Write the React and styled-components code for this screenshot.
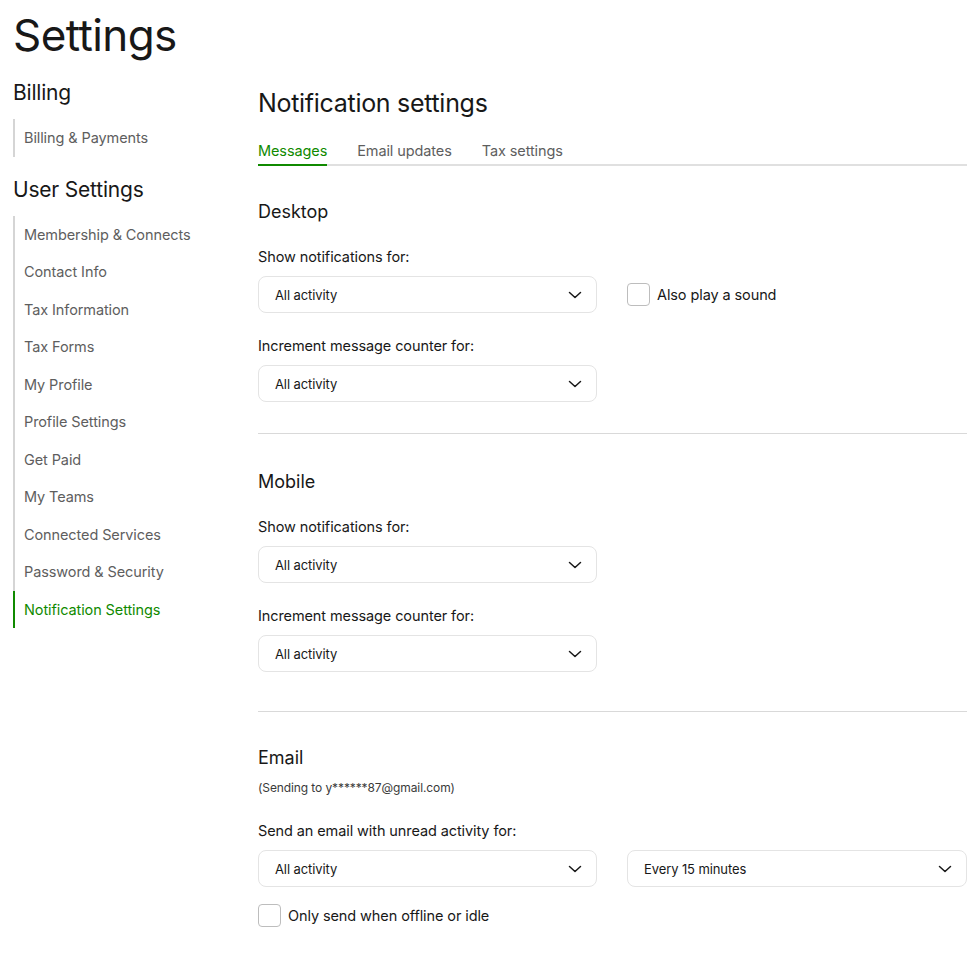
import React from "react";
import styled, { createGlobalStyle } from "styled-components";

const GlobalStyle = createGlobalStyle`
  body {
    margin: 0;
    font-family: Inter, "Noto Sans", Arial, sans-serif;
    color: #181818;
    background: #fff;
  }
  * { box-sizing: border-box; }
`;

const sideGroups = [
  { title: "Billing", items: ["Billing & Payments"] },
  {
    title: "User Settings",
    items: [
      "Membership & Connects",
      "Contact Info",
      "Tax Information",
      "Tax Forms",
      "My Profile",
      "Profile Settings",
      "Get Paid",
      "My Teams",
      "Connected Services",
      "Password & Security",
      "Notification Settings",
    ],
  },
];

const Chevron = () => (
  <svg width="14" height="14" viewBox="0 0 14 14" fill="none">
    <path d="M1.5 4.5 L7 9.5 L12.5 4.5" stroke="#181818" strokeWidth="1.5" strokeLinecap="round" strokeLinejoin="round" />
  </svg>
);

const Select = ({ value, wide }) => (
  <SelectBox $wide={wide}>
    <span>{value}</span>
    <Chevron />
  </SelectBox>
);

const App = () => {
  return (
    <Page>
      <GlobalStyle />
      <PageTitle>Settings</PageTitle>
      <Layout>
        <Sidebar>
          {sideGroups.map((g) => (
            <SideGroup key={g.title}>
              <SideTitle>{g.title}</SideTitle>
              <SideList>
                {g.items.map((item) => (
                  <SideItem key={item} $active={item === "Notification Settings"}>
                    {item}
                  </SideItem>
                ))}
              </SideList>
            </SideGroup>
          ))}
        </Sidebar>

        <Main>
          <MainTitle>Notification settings</MainTitle>
          <Tabs>
            <Tab $active>Messages</Tab>
            <Tab>Email updates</Tab>
            <Tab>Tax settings</Tab>
          </Tabs>

          <Section $bottom={31}>
            <SectionTitle>Desktop</SectionTitle>
            <FieldLabel>Show notifications for:</FieldLabel>
            <FieldRow>
              <Select value="All activity" />
              <Check>
                <Box />
                Also play a sound
              </Check>
            </FieldRow>
            <FieldLabel>Increment message counter for:</FieldLabel>
            <FieldRow>
              <Select value="All activity" />
            </FieldRow>
          </Section>

          <Divider />

          <Section $top={36} $bottom={39}>
            <SectionTitle>Mobile</SectionTitle>
            <FieldLabel>Show notifications for:</FieldLabel>
            <FieldRow>
              <Select value="All activity" />
            </FieldRow>
            <FieldLabel>Increment message counter for:</FieldLabel>
            <FieldRow>
              <Select value="All activity" />
            </FieldRow>
          </Section>

          <Divider />

          <Section>
            <SectionTitle>Email</SectionTitle>
            <Note>(Sending to y******87@gmail.com)</Note>
            <FieldLabel $top={25}>Send an email with unread activity for:</FieldLabel>
            <FieldRow>
              <Select value="All activity" />
              <Select value="Every 15 minutes" wide />
            </FieldRow>
            <Check $top={17}>
              <Box />
              Only send when offline or idle
            </Check>
          </Section>
        </Main>
      </Layout>
    </Page>
  );
};

const Page = styled.div`
  padding: 7px 0 40px 13px;
  width: 967px;
`;

const PageTitle = styled.h1`
  margin: 0;
  font-size: 44px;
  line-height: 56px;
  font-weight: 400;
  letter-spacing: -0.6px;
`;

const Layout = styled.div`
  display: flex;
  margin-top: 16px;
`;

const Sidebar = styled.nav`
  width: 245px;
  flex-shrink: 0;
  display: flex;
  flex-direction: column;
  gap: 19px;
`;

const SideGroup = styled.div`
  display: flex;
  flex-direction: column;
  gap: 12px;
`;

const SideTitle = styled.h2`
  margin: 0;
  font-size: 21px;
  line-height: 28px;
  font-weight: 400;
  letter-spacing: -0.2px;
`;

const SideList = styled.ul`
  list-style: none;
  margin: 0;
  padding: 0;
  border-left: 2px solid #d5d5d5;
`;

const SideItem = styled.li`
  padding: 8px 0 8px 9px;
  margin-left: -2px;
  line-height: 21.5px;
  font-size: 14.5px;
  font-weight: 400;
  letter-spacing: -0.1px;
  color: ${({ $active }) => ($active ? "#108a00" : "#5e5e5e")};
  border-left: 2px solid ${({ $active }) => ($active ? "#108a00" : "transparent")};
  white-space: nowrap;
`;

const Main = styled.main`
  flex: 1;
  padding-top: 8px;
`;

const MainTitle = styled.h2`
  margin: 0;
  font-size: 25px;
  line-height: 32px;
  font-weight: 400;
  letter-spacing: -0.3px;
`;

const Tabs = styled.div`
  display: flex;
  gap: 30px;
  margin-top: 22px;
  border-bottom: 2px solid #e0e0e0;
`;

const Tab = styled.div`
  font-size: 14.5px;
  line-height: 20px;
  font-weight: 400;
  letter-spacing: -0.1px;
  padding-bottom: 3px;
  margin-bottom: -2px;
  color: ${({ $active }) => ($active ? "#108a00" : "#5e5e5e")};
  border-bottom: 2px solid ${({ $active }) => ($active ? "#108a00" : "transparent")};
`;

const Section = styled.section`
  padding: ${({ $top }) => $top ?? 34}px 0 ${({ $bottom }) => $bottom ?? 30}px;
`;

const SectionTitle = styled.h3`
  margin: 0;
  font-size: 18px;
  line-height: 24px;
  font-weight: 400;
`;

const Note = styled.p`
  margin: 10px 0 0;
  font-size: 12px;
  line-height: 16px;
  letter-spacing: -0.1px;
  color: #3a3a3a;
`;

const FieldLabel = styled.div`
  margin-top: ${({ $top }) => $top ?? 23}px;
  font-size: 14.5px;
  line-height: 20px;
  font-weight: 400;
  letter-spacing: -0.1px;
`;

const FieldRow = styled.div`
  display: flex;
  align-items: center;
  gap: 30px;
  margin-top: 9px;
`;

const SelectBox = styled.div`
  width: ${({ $wide }) => ($wide ? 340 : 339)}px;
  height: 37px;
  display: flex;
  align-items: center;
  justify-content: space-between;
  padding: 0 14px 0 16px;
  border: 1px solid #e4e4e4;
  border-radius: 8px;
  font-size: 13px;
  font-weight: 400;
  letter-spacing: -0.1px;
  color: #181818;
`;

const Check = styled.label`
  display: flex;
  align-items: center;
  gap: 7px;
  margin-top: ${({ $top }) => $top ?? 0}px;
  font-size: 14.5px;
  font-weight: 400;
  letter-spacing: -0.1px;
`;

const Box = styled.span`
  width: 23px;
  height: 23px;
  border: 1px solid #bdbdbd;
  border-radius: 4px;
  background: #fff;
`;

const Divider = styled.hr`
  margin: 0;
  border: 0;
  border-top: 1px solid #d9d9d9;
`;

export default App;
